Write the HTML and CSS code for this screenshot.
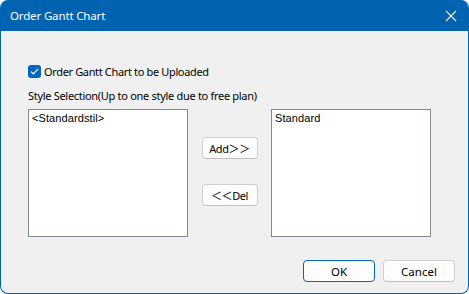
FILE: index.html
```html
<!DOCTYPE html>
<html lang="en">
<head>
  <meta charset="UTF-8">
  <title>Order Gantt Chart</title>
  <link rel="stylesheet" href="styles.css">
</head>
<body>
<div class="window">

  <!-- Title bar -->
  <div class="titlebar">
    <span class="title">Order Gantt Chart</span>
    <svg class="close" width="12" height="12" viewBox="0 0 12 12">
      <path d="M1 1 L11 11 M11 1 L1 11" stroke="#fff" stroke-width="1.1" fill="none"/>
    </svg>
  </div>

  <div class="content">
    <label class="check-row">
      <span class="checkbox">
        <svg width="9" height="7" viewBox="0 0 9 7">
          <path d="M1 3.6 L3.3 5.8 L8 1" stroke="#fff" stroke-width="1.2" fill="none"/>
        </svg>
      </span>
      Order Gantt Chart to be Uploaded
    </label>

    <div class="caption">Style Selection(Up to one style due to free plan)</div>

    <div class="picker">
      <div class="listbox">
        <div class="item">&lt;Standardstil&gt;</div>
      </div>
      <div class="move-col">
        <button class="btn small">Add＞＞</button>
        <button class="btn small">＜＜Del</button>
      </div>
      <div class="listbox">
        <div class="item">Standard</div>
      </div>
    </div>

    <div class="footer">
      <button class="btn wide default">OK</button>
      <button class="btn wide">Cancel</button>
    </div>
  </div>

</div>
</body>
</html>
```

FILE: styles.css
```css
:root {
  --title-blue: #0063b1;
  --face: #f0f0f0;
  --list-border: #828790;
  --text: #000;
}

* { box-sizing: border-box; }

body {
  margin: 0;
  width: 469px;
  height: 294px;
  background: #ffffff;
  font-family: "Noto Sans", "Liberation Sans", sans-serif;
  font-size: 11px;
  color: var(--text);
}

.window {
  width: 469px;
  height: 294px;
  display: flex;
  flex-direction: column;
  border: 1px solid var(--title-blue);
  border-top: none;
  border-radius: 8px;
  overflow: hidden;
  background: var(--face);
}

.titlebar {
  height: 31px;
  flex: none;
  background: var(--title-blue);
  display: flex;
  align-items: center;
  justify-content: space-between;
  padding: 0 10px 0 9px;
  color: #fff;
}

.title {
  font-size: 11.5px;
  letter-spacing: -0.15px;
}

.close {
  margin-right: 1px;
}

.content {
  flex: 1;
  display: flex;
  flex-direction: column;
  padding: 33px 13px 0 27px;
}

.check-row {
  display: flex;
  align-items: center;
  gap: 3px;
  height: 14px;
  letter-spacing: -0.35px;
}

.checkbox {
  width: 13px;
  height: 13px;
  border-radius: 3px;
  background: #0067c0;
  display: flex;
  align-items: center;
  justify-content: center;
}

.caption {
  margin-top: 10px;
  height: 16px;
  line-height: 16px;
  letter-spacing: -0.3px;
}

.picker {
  margin-top: 5px;
  display: flex;
}

.listbox {
  width: 160px;
  height: 128px;
  background: #fff;
  border: 1px solid var(--list-border);
  padding: 2px 3px;
}

.item {
  font-family: "Liberation Sans", sans-serif;
  font-size: 11px;
  line-height: 13px;
  letter-spacing: 0.1px;
}

.move-col {
  width: 83px;
  display: flex;
  flex-direction: column;
  align-items: center;
  gap: 25px;
  padding-top: 28px;
}

.btn {
  font-family: "Noto Sans", "Noto Sans CJK JP", sans-serif;
  font-size: 11px;
  color: var(--text);
  background: #fdfdfd;
  border: 1px solid #d0d0d0;
  border-bottom-color: #c0c0c0;
  border-radius: 4px;
  padding: 0;
  height: 22px;
}

.btn.small {
  width: 56px;
  letter-spacing: -0.4px;
}

.btn.wide {
  width: 72px;
  height: 22px;
  font-size: 11.5px;
}

.btn.default {
  border: 1px solid #0067c0;
}

.footer {
  margin-top: 23px;
  display: flex;
  justify-content: flex-end;
  gap: 8px;
}
```
